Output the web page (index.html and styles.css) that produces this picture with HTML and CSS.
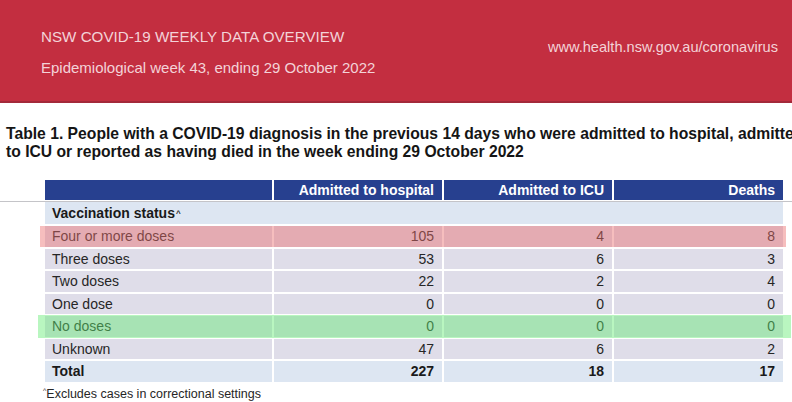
FILE: index.html
```html
<!DOCTYPE html>
<html lang="en">
<head>
<meta charset="utf-8">
<title>NSW COVID-19 Weekly Data Overview</title>
<link rel="stylesheet" href="styles.css">
</head>
<body>
<header class="banner">
  <div class="banner-left">
    <div class="banner-title">NSW COVID-19 WEEKLY DATA OVERVIEW</div>
    <div class="banner-sub">Epidemiological week 43, ending 29 October 2022</div>
  </div>
  <div class="banner-url">www.health.nsw.gov.au/coronavirus</div>
</header>

<h1 class="table-title">
  <span class="line">Table 1. People with a COVID-19 diagnosis in the previous 14 days who were admitted to hospital, admitted</span>
  <span class="line">to ICU or reported as having died in the week ending 29 October 2022</span>
</h1>

<div class="table-wrap">
  <div class="data-table">
    <div class="row head">
      <div class="cell"></div>
      <div class="cell num">Admitted to hospital</div>
      <div class="cell num">Admitted to ICU</div>
      <div class="cell num">Deaths</div>
    </div>
    <div class="row section">
      <div class="cell span">Vaccination status<sup class="caret">^</sup></div>
    </div>
    <div class="row data hl-red">
      <div class="cell">Four or more doses</div>
      <div class="cell num">105</div>
      <div class="cell num">4</div>
      <div class="cell num">8</div>
    </div>
    <div class="row data">
      <div class="cell">Three doses</div>
      <div class="cell num">53</div>
      <div class="cell num">6</div>
      <div class="cell num">3</div>
    </div>
    <div class="row data">
      <div class="cell">Two doses</div>
      <div class="cell num">22</div>
      <div class="cell num">2</div>
      <div class="cell num">4</div>
    </div>
    <div class="row data">
      <div class="cell">One dose</div>
      <div class="cell num">0</div>
      <div class="cell num">0</div>
      <div class="cell num">0</div>
    </div>
    <div class="row data hl-green">
      <div class="cell">No doses</div>
      <div class="cell num">0</div>
      <div class="cell num">0</div>
      <div class="cell num">0</div>
    </div>
    <div class="row data">
      <div class="cell">Unknown</div>
      <div class="cell num">47</div>
      <div class="cell num">6</div>
      <div class="cell num">2</div>
    </div>
    <div class="row total">
      <div class="cell">Total</div>
      <div class="cell num">227</div>
      <div class="cell num">18</div>
      <div class="cell num">17</div>
    </div>
  </div>
  <p class="footnote"><sup class="mark">^</sup>Excludes cases in correctional settings</p>
</div>
</body>
</html>
```

FILE: styles.css
```css
html, body {
  margin: 0;
  padding: 0;
  background: #ffffff;
}

body {
  width: 792px;
  height: 402px;
  overflow: hidden;
  font-family: "Liberation Sans", Arial, sans-serif;
  color: #262626;
}

.banner {
  height: 101px;
  background: #c32e40;
  border-bottom: 2px solid #a3293a;
  display: flex;
  justify-content: space-between;
  align-items: flex-start;
  padding: 0 14px 0 41px;
  box-sizing: content-box;
  color: #f3d3d8;
}

.banner-left {
  display: flex;
  flex-direction: column;
  padding-top: 29px;
}

.banner-title {
  font-size: 15.2px;
  line-height: 16px;
}

.banner-sub {
  font-size: 15px;
  line-height: 16px;
  margin-top: 15px;
}

.banner-url {
  font-size: 14.6px;
  line-height: 16px;
  padding-top: 39px;
}

.table-title {
  margin: 22px 0 0 6px;
  font-size: 15.7px;
  line-height: 18px;
  font-weight: bold;
  color: #151515;
  white-space: nowrap;
}

.table-title .line {
  display: block;
}

.table-wrap {
  margin-top: 19px;
  padding-left: 45px;
  background: linear-gradient(#c4c4c8, #c4c4c8) 0 21px / 100% 1px no-repeat;
}

.data-table {
  width: 738px;
  display: flex;
  flex-direction: column;
  gap: 2px;
  font-size: 14px;
}

.row {
  display: grid;
  grid-template-columns: 227px 168px 168px 169px;
  column-gap: 2px;
  position: relative;
}

.cell {
  display: flex;
  align-items: center;
  padding: 0 7px;
  white-space: nowrap;
}

.cell.num {
  justify-content: flex-end;
  padding: 0 8px 0 7px;
}

.row.head {
  height: 20px;
}

.row.head .cell {
  background: #27408f;
  color: #ffffff;
  font-weight: bold;
}

.row.section {
  height: 22px;
  grid-template-columns: 1fr;
}

.row.section .cell {
  background: #dde6f2;
  font-weight: bold;
  color: #1a1a1a;
}

.caret {
  font-size: 8px;
  vertical-align: 5px;
  margin-left: 1px;
}

.row.data {
  height: 20.5px;
}

.row.data .cell {
  background: #dfdde9;
}

.row.total {
  height: 20.5px;
}

.row.total .cell {
  background: #dde6f2;
  font-weight: bold;
  color: #1a1a1a;
}

.hl-red::after,
.hl-green::after {
  content: "";
  position: absolute;
  top: 0;
  bottom: 0;
  pointer-events: none;
}

.hl-red::after {
  left: -5px;
  right: -3px;
  background: rgba(235, 110, 110, 0.45);
}

.hl-green::after {
  left: -7px;
  right: -8px;
  top: -1px;
  bottom: -1px;
  background: rgba(100, 235, 115, 0.45);
}

.footnote {
  margin: 1px 0 0 -2px;
  font-size: 12.5px;
  line-height: 16px;
  color: #262626;
}

.mark {
  font-size: 7px;
  vertical-align: 5px;
}
```
